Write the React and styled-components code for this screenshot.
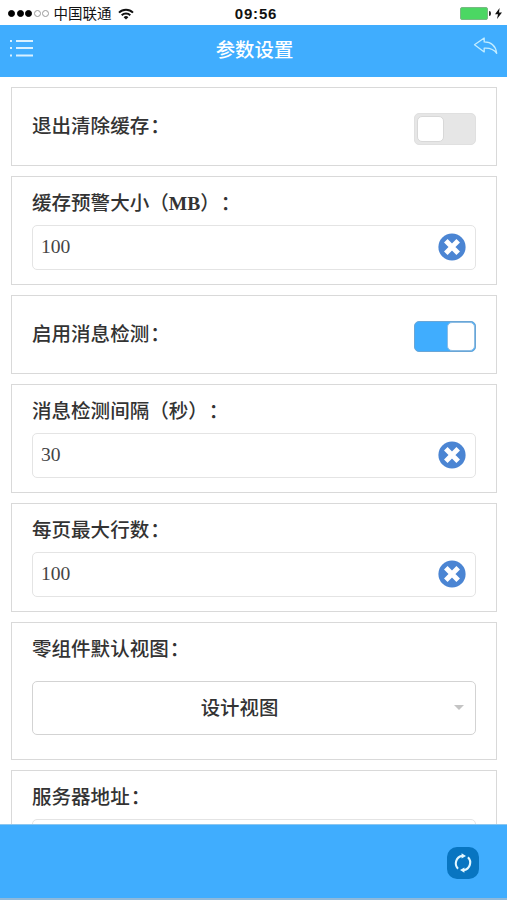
import { useState } from 'react';
import styled, { createGlobalStyle } from 'styled-components';

const COLOR_PRIMARY = '#40adfe';
const COLOR_BORDER = '#d9d9d9';

const GlobalStyle = createGlobalStyle`
	* {
		box-sizing: border-box;
	}
	body {
		margin: 0;
		background: #fff;
		font-family: 'Liberation Serif', 'Noto Sans CJK SC', serif;
		text-spacing-trim: space-all;
		color: #333;
	}
`;

const Screen = styled.div`
	display: flex;
	flex-direction: column;
	width: 507px;
	height: 900px;
	overflow: hidden;
`;

const StatusBar = styled.div`
	display: grid;
	grid-template-columns: 1fr auto 1fr;
	align-items: center;
	flex: none;
	height: 25px;
	padding: 2px 5px 0 8px;
	font-family: 'Liberation Sans', 'Noto Sans CJK SC', sans-serif;
	font-size: 14.5px;
	line-height: 20px;
	color: #111;
`;
const Carrier = styled.div`
	display: flex;
	align-items: center;
`;
const CarrierName = styled.span`
	margin: 0 6px 0 3px;
`;
const Signal = styled.span`
	width: 7px;
	height: 7px;
	margin-right: 1.5px;
	border: 1px solid ${(props) => (props.$on ? '#000' : '#999')};
	border-radius: 50%;
	background: ${(props) => (props.$on ? '#000' : '#fff')};
`;
const Clock = styled.div`
	margin-left: 2px;
	font-size: 15px;
	font-weight: bold;
	letter-spacing: 0.8px;
`;
const Power = styled.div`
	display: flex;
	align-items: center;
	justify-content: flex-end;
`;
const Battery = styled.div`
	width: 28px;
	height: 13px;
	border: 1px solid #79b983;
	border-radius: 2px;
	background: #4bd763;
`;
const BatteryTip = styled.div`
	width: 2px;
	height: 5px;
	margin: 0 4px 0 1px;
	border-radius: 0 2px 2px 0;
	background: #333;
`;

const Header = styled.header`
	display: flex;
	align-items: center;
	justify-content: space-between;
	flex: none;
	height: 52px;
	padding: 0 9px;
	background: ${COLOR_PRIMARY};
`;
const Title = styled.h1`
	margin: 0;
	padding-left: 2px;
	font-size: 19.4px;
	font-weight: 500;
	line-height: 28px;
	color: #fff;
`;
const IconButton = styled.button`
	display: flex;
	padding: 0 0 ${(props) => props.$lift}px;
	border: none;
	background: none;
	cursor: pointer;
`;

const Content = styled.main`
	display: flex;
	flex-direction: column;
	flex: 1;
	gap: 10px;
	min-height: 0;
	overflow: hidden;
	padding: 10px 10px 0 11px;
`;
const Card = styled.section`
	display: flex;
	flex-direction: column;
	flex: none;
	height: ${(props) => props.$height || 109}px;
	padding: 13px 20px 0;
	border: 1px solid ${COLOR_BORDER};
`;
const SwitchCard = styled(Card)`
	flex-direction: row;
	align-items: center;
	justify-content: space-between;
	height: 79px;
	padding-top: 1px;
`;
const Label = styled.label`
	height: 28px;
	font-size: 19.55px;
	font-weight: 500;
	line-height: 28px;
	white-space: nowrap;
`;
const Colon = styled.span`
	margin-left: 1px;
`;
const Latin = styled.span`
	font-weight: bold;
`;

const Switch = styled.button`
	display: flex;
	justify-content: ${(props) => (props.$on ? 'flex-end' : 'flex-start')};
	width: 62px;
	height: ${(props) => (props.$on ? 31 : 32)}px;
	margin: ${(props) => (props.$on ? '3px 0 0' : '4px 0 0')};
	padding: ${(props) => (props.$on ? '0' : '2px')};
	border: 1px solid ${(props) => (props.$on ? '#6aa6d6' : '#e0e0e0')};
	border-radius: 5px;
	background: ${(props) => (props.$on ? COLOR_PRIMARY : '#e6e6e6')};
	cursor: pointer;
`;
const Knob = styled.span`
	width: ${(props) => (props.$on ? 28 : 27)}px;
	height: 100%;
	border: 1px solid ${(props) => (props.$on ? '#8dbde4' : '#d8d8d8')};
	border-radius: 5px;
	background: #fff;
`;

const Field = styled.div`
	display: flex;
	align-items: center;
	flex: none;
	height: 45px;
	margin-top: 7px;
	padding: 0 9.5px 1px 8px;
	border: 1.5px solid #e4e4e4;
	border-radius: 5px;
`;
const Input = styled.input`
	flex: 1;
	min-width: 0;
	padding: 0;
	border: none;
	outline: none;
	background: none;
	font: 19.6px/24px 'Liberation Serif', serif;
	color: #444;
`;
const ClearButton = styled.button`
	display: flex;
	padding: 0;
	border: none;
	background: none;
	cursor: pointer;
`;

const Select = styled.button`
	display: flex;
	align-items: center;
	flex: none;
	height: 54px;
	margin-top: 17px;
	padding: 0 11px 2px 0;
	border: 1px solid #d3d3d3;
	border-radius: 5px;
	background: #fff;
	font: 500 19.4px/28px 'Noto Sans CJK SC', sans-serif;
	color: #333;
`;
const SelectValue = styled.span`
	flex: 1;
	padding-right: 8px;
`;
const Caret = styled.span`
	border: 5px solid transparent;
	border-top-color: #c4c4c4;
	border-bottom: none;
`;

const Footer = styled.footer`
	display: flex;
	align-items: center;
	justify-content: flex-end;
	flex: none;
	height: 76px;
	padding-right: 28px;
	border-top: 1px solid #8bc6ef;
	border-bottom: 2px solid #8fb9da;
	background: ${COLOR_PRIMARY};
`;
const RefreshButton = styled.button`
	display: flex;
	align-items: center;
	justify-content: center;
	width: 32px;
	height: 32px;
	margin-top: 2px;
	padding: 0;
	border: none;
	border-radius: 10px;
	background: #0875c1;
	cursor: pointer;
`;

const WifiIcon = () => (
	<svg width="16" height="12" viewBox="0 0 16 12" fill="none" stroke="#111" strokeWidth="2">
		<path d="M1 4.6a10 10 0 0 1 14 0M3.7 7.2a6.2 6.2 0 0 1 8.6 0" />
		<path d="M8 11.6 5.6 9.2a3.4 3.4 0 0 1 4.8 0z" fill="#111" stroke="none" />
	</svg>
);

const BoltIcon = () => (
	<svg width="7" height="11" viewBox="0 0 7 11">
		<path d="M4.6 0 0 6.2h3L2 11l5-6.4H4z" fill="#111" />
	</svg>
);

const MenuIcon = () => (
	<svg width="25" height="20" viewBox="0 0 25 20" stroke="#d9f1ff" strokeWidth="2">
		<path d="M1 3h2M7 3h17M1 10h2M7 10h17M1 17.5h2M7 17.5h17" />
	</svg>
);

const BackIcon = () => (
	<svg width="25" height="18" viewBox="0 0 25 18" fill="none" stroke="#c3edff" strokeWidth="1.3">
		<path
			d="M1.5 7.8 11.2 1v3.9c7 .2 11.6 4 12.5 11.4-2.8-4.2-6.2-5.6-12.5-5.2v3.8z"
			strokeLinejoin="round"
		/>
	</svg>
);

const ClearIcon = () => (
	<svg width="28" height="28" viewBox="0 0 28 28">
		<circle cx="14" cy="14" r="13.6" fill="#4b85d3" />
		<path d="m7.8 7.8 12.4 12.4M20.2 7.8 7.8 20.2" stroke="#fff" strokeWidth="5" />
	</svg>
);

const RefreshIcon = () => (
	<svg width="20" height="20" viewBox="0 0 20 20" fill="none" stroke="#e2f7ff" strokeWidth="2.1">
		<path d="M5 15.8A7.7 7.7 0 0 1 9 2.9M15 4.2A7.7 7.7 0 0 1 11 17.1" />
		<path d="M8.6.2 13 2.9 8.6 5.6zM11.4 14.4 7 17.1l4.4 2.7z" fill="#e2f7ff" stroke="none" />
	</svg>
);

const SwitchRow = ({ label, initial }) => {
	const [isOn, setOn] = useState(initial);
	return (
		<SwitchCard>
			<Label>
				{label}
				<Colon>：</Colon>
			</Label>
			<Switch $on={isOn} onClick={() => setOn(!isOn)}>
				<Knob $on={isOn} />
			</Switch>
		</SwitchCard>
	);
};

const InputRow = ({ label, initial }) => {
	const [value, setValue] = useState(initial);
	return (
		<Card>
			<Label>
				{label}
				<Colon>：</Colon>
			</Label>
			<Field>
				<Input value={value} onChange={(e) => setValue(e.target.value)} />
				<ClearButton onClick={() => setValue('')}>
					<ClearIcon />
				</ClearButton>
			</Field>
		</Card>
	);
};

const App = () => (
	<Screen>
		<GlobalStyle />
		<StatusBar>
			<Carrier>
				{[1, 2, 3, 4, 5].map((dot) => (
					<Signal key={dot} $on={dot < 4} />
				))}
				<CarrierName>中国联通</CarrierName>
				<WifiIcon />
			</Carrier>
			<Clock>09:56</Clock>
			<Power>
				<Battery />
				<BatteryTip />
				<BoltIcon />
			</Power>
		</StatusBar>
		<Header>
			<IconButton $lift={7}>
				<MenuIcon />
			</IconButton>
			<Title>参数设置</Title>
			<IconButton $lift={10}>
				<BackIcon />
			</IconButton>
		</Header>
		<Content>
			<SwitchRow label="退出清除缓存" initial={false} />
			<InputRow
				label={
					<>
						缓存预警大小（<Latin>MB</Latin>）
					</>
				}
				initial="100"
			/>
			<SwitchRow label="启用消息检测" initial={true} />
			<InputRow label="消息检测间隔（秒）" initial="30" />
			<InputRow label="每页最大行数" initial="100" />
			<Card $height={138}>
				<Label>
					零组件默认视图<Colon>：</Colon>
				</Label>
				<Select>
					<SelectValue>设计视图</SelectValue>
					<Caret />
				</Select>
			</Card>
			<InputRow label="服务器地址" initial="" />
		</Content>
		<Footer>
			<RefreshButton>
				<RefreshIcon />
			</RefreshButton>
		</Footer>
	</Screen>
);

export default App;
